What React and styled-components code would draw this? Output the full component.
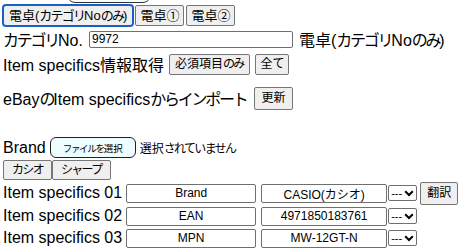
import React from "react";
import styled, { createGlobalStyle } from "styled-components";

const GlobalStyle = createGlobalStyle`
  body {
    margin: 0;
    background: #fff;
    color: #000;
    font-family: "Liberation Sans", "Noto Sans CJK JP", sans-serif;
    font-size: 16px;
    overflow: hidden;
  }
`;

const Page = styled.div`
  display: flow-root;
  padding: 0 3px;
`;

// the bottom of a control scrolled just out of view
const TopStub = styled.div`
  width: 84px;
  height: 24px;
  margin: -21px 0 0 64px;
  border: 1px solid #333;
  border-radius: 8px;
  background: #f4fefe;
  box-sizing: border-box;
`;

const K = styled.span`
  letter-spacing: -0.14em;
`;

const Row = styled.div`
  display: flex;
  align-items: center;
  height: ${(p) => p.h || 22}px;
  margin-top: ${(p) => p.mt || 0}px;
  gap: ${(p) => p.gap || 0}px;
  white-space: nowrap;
`;

const Text = styled.span`
  font-size: ${(p) => p.size || 16}px;
  margin-left: ${(p) => p.ml || 0}px;
  margin-right: ${(p) => p.mr || 0}px;
`;

const Button = styled.button`
  height: ${(p) => p.h || 21}px;
  padding: 0 ${(p) => p.px || 6}px;
  margin-left: ${(p) => p.ml || 0}px;
  font-family: "Liberation Sans", "Noto Sans CJK JP", sans-serif;
  font-size: ${(p) => p.size || 12}px;
  color: #000;
  background: #efefef;
  border: 1px solid #767676;
  border-radius: 2px;
  box-sizing: border-box;
  line-height: 1;
  ${(p) =>
    p.focused &&
    `
    border-color: #1a5fc4;
    box-shadow: 0 0 0 1px #1a5fc4;
    border-radius: 3px;
  `}
`;

const FileButton = styled.button`
  height: 21px;
  width: 86px;
  margin-left: 4px;
  padding: 0;
  font-family: "Noto Sans CJK JP", sans-serif;
  font-size: 9.5px;
  color: #000;
  background: #eefdfd;
  border: 1px solid #222;
  border-radius: 6px;
  box-sizing: border-box;
`;

const Field = styled.input`
  width: ${(p) => p.w}px;
  height: ${(p) => p.h || 19}px;
  margin-left: ${(p) => p.ml || 0}px;
  padding: 0 2px;
  box-sizing: border-box;
  border: 1px solid #6f6f6f;
  border-radius: 2px;
  font-family: "Liberation Sans", "Noto Sans CJK JP", sans-serif;
  font-size: 12px;
  color: #000;
  text-align: ${(p) => (p.center ? "center" : "left")};
  outline: none;
`;

const SelectWrap = styled.span`
  position: relative;
  display: inline-flex;
  margin-left: 1px;
  svg {
    position: absolute;
    right: 3px;
    top: 5px;
    pointer-events: none;
  }
`;

const Select = styled.select`
  appearance: none;
  width: 29px;
  height: 16px;
  padding: 0 0 0 2px;
  box-sizing: border-box;
  border: 1px solid #6f6f6f;
  border-radius: 2px;
  background: #fff;
  font-family: "Liberation Sans", sans-serif;
  font-size: 11px;
  color: #000;
  line-height: 1;
`;

const Chevron = () => (
  <svg width="10" height="7" viewBox="0 0 10 7">
    <path d="M1.2 1.2l3.8 3.8 3.8-3.8" fill="none" stroke="#000" strokeWidth="2" />
  </svg>
);

const specs = [
  { no: "01", name: "Brand", value: "CASIO(カシオ)", translate: true, h: 24 },
  { no: "02", name: "EAN", value: "4971850183761", h: 22 },
  { no: "03", name: "MPN", value: "MW-12GT-N", h: 22 },
];

const SpecRow = ({ no, name, value, translate, h }) => (
  <Row h={h}>
    <Text>Item specifics {no}</Text>
    <Field w={130} ml={4} center readOnly value={name} />
    <Field w={126} ml={5} center readOnly value={value} />
    <SelectWrap>
      <Select defaultValue="---">
        <option>---</option>
      </Select>
      <Chevron />
    </SelectWrap>
    {translate && (
      <Button ml={3} h={23} px={6} size={12}>
        翻訳
      </Button>
    )}
  </Row>
);

export default function App() {
  return (
    <Page>
      <GlobalStyle />
      <TopStub />
      <Row h={24} gap={2}>
        <Button focused px={5} size={13}>
          電卓(<K>カテゴリ</K>No<K>のみ</K>)
        </Button>
        <Button px={4} size={13}>
          電卓①
        </Button>
        <Button px={4} size={13}>
          電卓②
        </Button>
      </Row>
      <Row h={24}>
        <Text>
          <K>カテゴリ</K>No.
        </Text>
        <Field w={204} h={17} ml={6} readOnly value="9972" />
        <Text ml={6}>
          電卓(<K>カテゴリ</K>No<K>のみ</K>)
        </Text>
      </Row>
      <Row h={26}>
        <Text mr={5}>Item specifics情報取得</Text>
        <Button size={12} px={5}>
          必須項目<K>のみ</K>
        </Button>
        <Button size={12} px={5} ml={5}>
          全<K>て</K>
        </Button>
      </Row>
      <Row h={28} mt={7}>
        <Text mr={8}>
          eBay<K>の</K>Item specifics<K>からインポート</K>
        </Text>
        <Button size={12} px={6} h={23}>
          更新
        </Button>
      </Row>
      <Row h={23} mt={24}>
        <Text>Brand</Text>
        <FileButton>
          <K>ファイルを</K>選択
        </FileButton>
        <Text size={12} ml={4}>
          選択<K>されていません</K>
        </Text>
      </Row>
      <Row h={22}>
        <Button size={12} px={8} h={20}>
          <K>カシオ</K>
        </Button>
        <Button size={12} px={8} h={20}>
          <K>シャープ</K>
        </Button>
      </Row>
      {specs.map((s) => (
        <SpecRow key={s.no} {...s} />
      ))}
    </Page>
  );
}
